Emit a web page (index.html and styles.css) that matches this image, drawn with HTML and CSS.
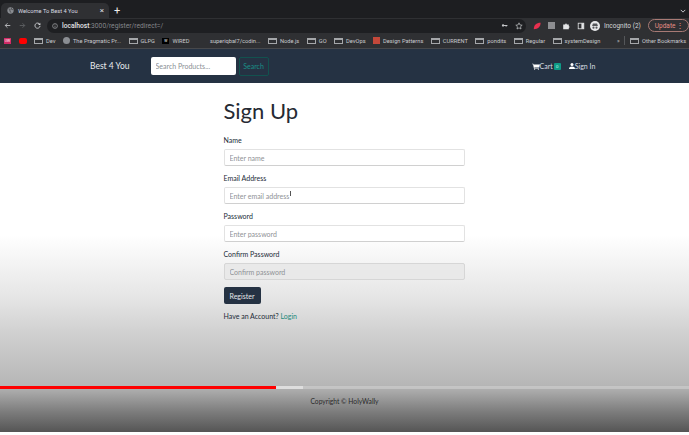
FILE: index.html
```html
<!DOCTYPE html>
<html lang="en">
<head>
  <meta charset="UTF-8" />
  <title>Welcome To Best 4 You</title>
  <link rel="stylesheet" href="styles.css">
</head>
<body>
  <div class="screen">

    <!-- Browser chrome -->
    <div class="tabstrip">
      <div class="tab">
        <svg class="tab-globe" viewBox="0 0 10 10"><circle cx="5" cy="5" r="4.5" fill="#8b8e93"/><path d="M2 2.5l2.5 1-.5 2 1.5 2.5M6.500 1l-.5 2 2.500 1" stroke="#35363a" fill="none"/></svg>
        <span class="tab-title">Welcome To Best 4 You</span>
        <span class="tab-close">×</span>
      </div>
      <span class="tab-new">+</span>
      <svg class="tab-chevron" viewBox="0 0 8 5"><path d="M1 1l3 3 3-3" stroke="#d5d7da" stroke-width="1.2" fill="none"/></svg>
    </div>

    <div class="toolbar">
      <svg class="nav-icon" viewBox="0 0 10 10"><path d="M9 5H2M5 1.800L1.800 5 5 8.200" stroke="#d5d7da" stroke-width="1.100" fill="none"/></svg>
      <svg class="nav-icon" viewBox="0 0 10 10"><path d="M1 5h7M5 1.800L8.200 5 5 8.200" stroke="#66686c" stroke-width="1.100" fill="none"/></svg>
      <svg class="nav-icon" viewBox="0 0 10 10"><path d="M8.300 3.500A3.700 3.700 0 1 0 8.700 5.500" stroke="#d5d7da" stroke-width="1.200" fill="none"/><path d="M9 1v3.200H5.800z" fill="#d5d7da"/></svg>
      <div class="omnibox">
        <svg class="omni-info" viewBox="0 0 10 10"><circle cx="5" cy="5" r="4" stroke="#b5b7ba" fill="none"/><path d="M5 4.500v3M5 2.500v1" stroke="#b5b7ba"/></svg>
        <span class="url"><b>localhost</b>:3000/register/redirect=/</span>
        <svg class="omni-key" viewBox="0 0 12 8"><circle cx="3.500" cy="4" r="2" fill="#c4c6c9"/><path d="M5 3.200h6v1.600H9.500v1.200H8V4.800H5z" fill="#c4c6c9"/></svg>
        <svg class="omni-star" viewBox="0 0 10 10"><path d="M5 1l1.200 2.700 2.800.3-2.100 1.900.6 2.900L5 7.300 2.500 8.800l.6-2.900L1 4l2.800-.3z" stroke="#d5d7da" stroke-width=".8" fill="none"/></svg>
      </div>
      <svg class="ext" viewBox="0 0 10 10"><path d="M1 9C1 4 4 1 9.500 1 9.500 6 6 9 1 9z" fill="#e8304f"/></svg>
      <span class="ext-square"></span>
      <svg class="ext" viewBox="0 0 10 10"><path d="M1.500 3H4a1 1 0 1 1 2 0h2.500v2.300a1 1 0 1 1 0 2V9H1.500z" fill="#e4e5e7"/></svg>
      <svg class="ext" viewBox="0 0 10 10"><rect x="1.500" y="1.500" width="7" height="7" stroke="#e4e5e7" fill="none"/><rect x="5.500" y="1.500" width="3" height="7" fill="#e4e5e7"/></svg>
      <div class="incognito">
        <svg class="incognito-icon" viewBox="0 0 12 12"><circle cx="6" cy="6" r="6" fill="#e8e9eb"/><path d="M2.500 6h7L8.500 3h-5z" fill="#55575b"/><circle cx="4.200" cy="8" r="1.300" fill="#55575b"/><circle cx="7.800" cy="8" r="1.300" fill="#55575b"/></svg>
        <span>Incognito (2)</span>
      </div>
      <div class="update"><span>Update</span><span class="update-dots">⋮</span></div>
    </div>

    <div class="bookmarks">
      <span class="mark"><i class="fav fav-pink">UW</i></span>
      <span class="mark"><i class="fav fav-yt"></i></span>
      <span class="mark"><i class="folder"></i>Dev</span>
      <span class="mark"><i class="fav fav-globe"></i>The Pragmatic Pr...</span>
      <span class="mark"><i class="folder"></i>GLPG</span>
      <span class="mark"><i class="fav fav-wired">W</i>WIRED</span>
      <span class="mark mark-gap">superiqbal7/codin...</span>
      <span class="mark"><i class="folder"></i>Node.js</span>
      <span class="mark"><i class="folder"></i>GO</span>
      <span class="mark"><i class="folder"></i>DevOps</span>
      <span class="mark"><i class="fav fav-dp"></i>Design Patterns</span>
      <span class="mark"><i class="folder"></i>CURRENT</span>
      <span class="mark"><i class="folder"></i>pondits</span>
      <span class="mark"><i class="folder"></i>Regular</span>
      <span class="mark"><i class="folder"></i>systemDesign</span>
      <span class="more">»</span>
      <span class="divider"></span>
      <span class="mark"><i class="folder"></i>Other Bookmarks</span>
    </div>

    <!-- Site -->
    <nav class="navbar">
      <a class="brand">Best 4 You</a>
      <input class="search-input" type="text" placeholder="Search Products..." />
      <button class="search-btn">Search</button>
      <div class="nav-links">
        <a class="nav-link">
          <svg class="nav-glyph" viewBox="0 0 12 10"><path d="M0 .8h2l.4 1.200H12l-1.300 4.500H3.500l.3 1H10.500v.8H3L1.500 1.600H0z" fill="#fff"/><circle cx="4" cy="9.200" r=".8" fill="#fff"/><circle cx="9.500" cy="9.200" r=".8" fill="#fff"/></svg>Cart<span class="badge">0</span>
        </a>
        <a class="nav-link">
          <svg class="nav-glyph nav-glyph-user" viewBox="0 0 10 10"><circle cx="5" cy="2.700" r="2.500" fill="#fff"/><path d="M0 10c0-3 2-4.300 5-4.300s5 1.300 5 4.300z" fill="#fff"/></svg>Sign In
        </a>
      </div>
    </nav>

    <main class="content">
      <form class="form">
        <h1>Sign Up</h1>
        <label class="field">Name<input type="text" placeholder="Enter name" /></label>
        <label class="field">Email Address<input type="text" placeholder="Enter email address" /></label>
        <label class="field">Password<input type="text" placeholder="Enter password" /></label>
        <label class="field">Confirm Password<input class="input-dim" type="text" placeholder="Confirm password" /></label>
        <button class="register" type="button">Register</button>
        <p class="switch">Have an Account? <a>Login</a></p>
      </form>
    </main>

    <footer class="footer">Copyright © HolyWally</footer>

    <!-- Text cursor and video progress bar lie over the page -->
    <span class="ibeam"></span>
    <div class="progress">
      <span class="progress-played"></span>
      <span class="progress-buffer"></span>
    </div>
  </div>
</body>
</html>
```

FILE: styles.css
```css
html, body {
  margin: 0;
  background: #fff;
  overflow: hidden;
}
body {
  width: 689px;
  height: 435px;
}
.screen {
  position: relative;
  height: 432px;
  display: flex;
  flex-direction: column;
  font-family: Lato, sans-serif;
  background: linear-gradient(to bottom, #fff 0, #fff 235px, #f3f3f3 265px, #e4e4e4 300px, #d2d2d2 330px, #b6b6b6 385px, #a8a8a8 392px, #7c7c7c 412px, #555 432px);
}

/* Browser chrome */
.tabstrip {
  height: 18px;
  background: #1d1e21;
  display: flex;
  align-items: flex-end;
  color: #dadce0;
  font-family: Roboto, sans-serif;
}
.tab {
  width: 108px;
  height: 15px;
  margin-left: 1px;
  padding: 0 5px;
  box-sizing: border-box;
  background: #2f3033;
  border-radius: 5px 5px 0 0;
  display: flex;
  align-items: center;
  gap: 4px;
}
.tab-globe {
  width: 7px;
  height: 7px;
  margin-left: 1px;
}
.tab-title {
  font-size: 5.700px;
  flex: 1;
}
.tab-close {
  font-size: 8px;
}
.tab-new {
  margin-left: 5px;
  font-size: 11px;
  line-height: 15px;
  color: #eee;
}
.tab-chevron {
  width: 6px;
  height: 4px;
  margin: 0 2px 5px auto;
  padding-right: 1px;
}

.toolbar {
  height: 15px;
  background: #2f3033;
  display: flex;
  align-items: center;
  color: #dadce0;
  font-family: Roboto, sans-serif;
  font-size: 6.500px;
}
.nav-icon {
  width: 7px;
  height: 7px;
  margin-left: 4px;
  margin-right: 4px;
}
.omnibox {
  width: 479px;
  height: 14px;
  margin-left: 2px;
  padding: 0 3px 0 5px;
  box-sizing: border-box;
  background: #1e1f22;
  border-radius: 7px;
  display: flex;
  align-items: center;
}
.omni-info {
  width: 6px;
  height: 6px;
  margin-right: 4px;
}
.url {
  color: #85878b;
  flex: 1;
  font-size: 6.700px;
}
.url b {
  color: #e3e4e6;
  font-weight: 500;
}
.omni-key {
  width: 7px;
  height: 5px;
  margin-right: 7px;
}
.omni-star {
  width: 8px;
  height: 8px;
}
.ext {
  width: 8px;
  height: 8px;
  margin-left: 7px;
}
.ext:first-of-type {
  margin-left: 0;
}
.ext-square {
  width: 7px;
  height: 7px;
  margin-left: 7px;
  background: #8d8e91;
}
.incognito {
  margin-left: 5px;
  display: flex;
  align-items: center;
  gap: 4px;
  color: #d5d7da;
}
.incognito-icon {
  width: 10px;
  height: 10px;
}
.update {
  margin-left: 7px;
  width: 41px;
  height: 13px;
  padding: 0 4px 0 6px;
  box-sizing: border-box;
  border: 1px solid #a87a75;
  border-radius: 7px;
  display: flex;
  align-items: center;
  justify-content: space-between;
  color: #e58e85;
}
.update-dots {
  font-size: 8px;
}

.bookmarks {
  height: 16px;
  padding: 0 0 0 4px;
  box-sizing: border-box;
  background: #2f3033;
  border-bottom: 1px solid #47484b;
  display: flex;
  align-items: center;
  gap: 7.500px;
  color: #c9cbce;
  font-family: Roboto, sans-serif;
  font-size: 5.700px;
  white-space: nowrap;
}
.mark {
  display: flex;
  align-items: center;
  gap: 3px;
}
.mark-gap {
  margin-left: 13px;
}
.fav {
  width: 7px;
  height: 6px;
  display: block;
  font-style: normal;
  font-size: 3.500px;
  line-height: 6px;
  text-align: center;
  color: #fff;
}
.fav-pink {
  background: #d12b66;
}
.fav-yt {
  width: 8px;
  background: #f00;
  border-radius: 2px;
}
.fav-globe {
  height: 7px;
  background: #8b8e93;
  border-radius: 50%;
}
.fav-wired {
  background: #000;
}
.fav-dp {
  height: 7px;
  background: #c4483a;
}
.folder {
  width: 7px;
  height: 3px;
  display: block;
  border: 1px solid #a5a7aa;
  border-top-width: 2px;
}
.more {
  margin-left: 9px;
}
.divider {
  width: 1px;
  height: 9px;
  margin: 0 -2.500px 0 -3px;
  background: #55575a;
}

/* Site nav */
.navbar {
  height: 34px;
  flex-shrink: 0;
  padding-left: 90px;
  box-sizing: border-box;
  background: #253243;
  display: flex;
  align-items: center;
  color: #fff;
}
.brand {
  font-size: 8.500px;
  color: #e8eaec;
  margin-right: 21px;
}
.search-input {
  width: 85px;
  height: 18px;
  padding: 0 5px;
  box-sizing: border-box;
  border: 0;
  border-radius: 2px;
  background: #fff;
  font-family: Lato, sans-serif;
  font-size: 7px;
}
.search-input::placeholder {
  color: #8a8f94;
}
.search-btn {
  width: 30px;
  height: 19px;
  margin-left: 3px;
  padding: 0;
  border: 1px solid #12524f;
  border-radius: 2px;
  background: transparent;
  color: #1a8f87;
  font-family: Lato, sans-serif;
  font-size: 7px;
}
.nav-links {
  margin-left: 263px;
  display: flex;
  gap: 8px;
}
.nav-link {
  display: flex;
  align-items: center;
  font-size: 7px;
  color: #d8dde2;
}
.nav-glyph {
  width: 8px;
  height: 7px;
}
.nav-glyph-user {
  width: 6px;
  height: 6px;
}
.badge {
  width: 7px;
  height: 7px;
  margin-left: 1px;
  border-radius: 1px;
  background: #0e9a86;
  font-size: 4px;
  line-height: 7px;
  text-align: center;
  color: #cfe;
}

/* Sign up form */
.content {
  flex: 1;
  display: flex;
  justify-content: center;
}
.form {
  width: 241px;
  margin-left: -1px;
  color: #222b37;
}
h1 {
  margin: 14px 0 10px;
  font-size: 22px;
  line-height: 28px;
  font-weight: 400;
  color: #252a33;
}
.field {
  display: block;
  margin-bottom: 7px;
  font-size: 7px;
  line-height: 11px;
}
.field input {
  display: block;
  width: 100%;
  height: 17px;
  margin-top: 3px;
  padding: 0 5px;
  box-sizing: border-box;
  border: 1px solid #e2e2e2;
  border-bottom-color: #d0d0d0;
  border-radius: 2px;
  background: #fff;
  font-family: Lato, sans-serif;
  font-size: 7px;
}
.field input.input-dim {
  background: #e9e9e9;
  border-color: #d6d6d6;
}
.field input::placeholder {
  color: #8f9296;
}
.register {
  display: block;
  width: 37px;
  height: 17px;
  padding: 0;
  border: 0;
  border-radius: 2px;
  background: #253243;
  color: #e6e8ea;
  font-family: Lato, sans-serif;
  font-size: 7px;
}
.switch {
  margin: 7px 0 0;
  font-size: 7px;
  line-height: 10px;
}
.switch a {
  color: #1c8a7c;
}

.footer {
  height: 36px;
  flex-shrink: 0;
  text-align: center;
  font-size: 6.700px;
  line-height: 10px;
  color: #2a2a2a;
}

.ibeam {
  position: absolute;
  left: 290px;
  top: 191px;
  width: 1px;
  height: 5px;
  background: #555;
}
.progress {
  position: absolute;
  left: 0;
  right: 0;
  top: 386px;
  height: 3px;
  background: rgba(225, 225, 225, .4);
  display: flex;
}
.progress-played {
  width: 276px;
  background: #f00;
}
.progress-buffer {
  width: 27px;
  background: #dedede;
}
```
